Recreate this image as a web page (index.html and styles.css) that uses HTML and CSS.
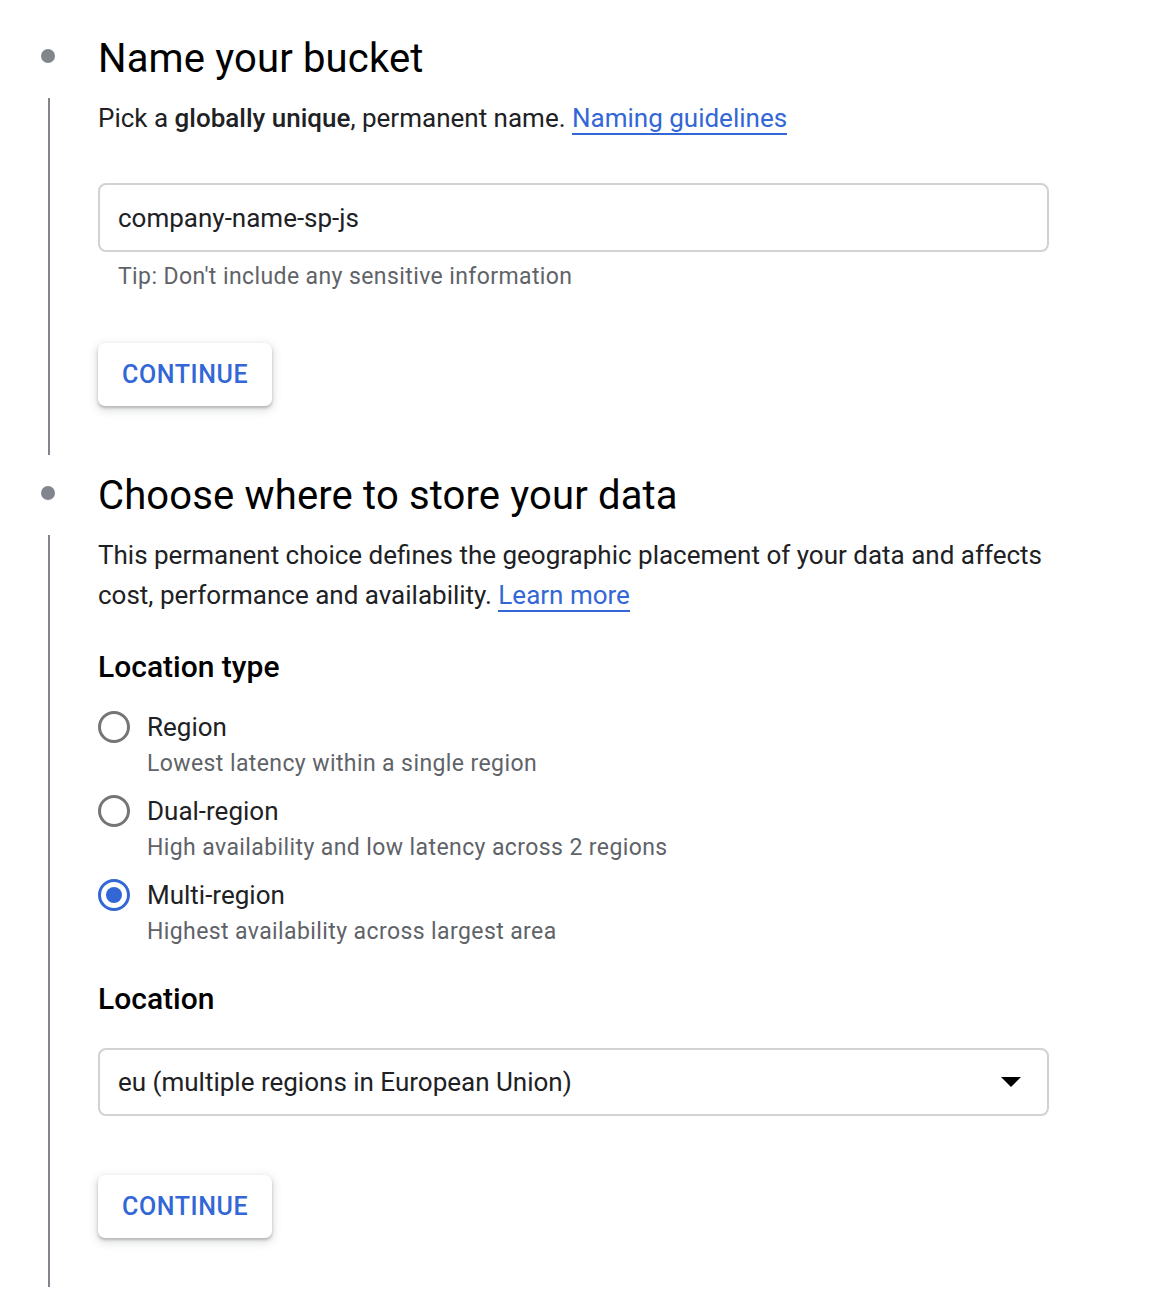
FILE: index.html
```html
<!DOCTYPE html>
<html lang="en">
<head>
<meta charset="utf-8">
<title>Create a bucket</title>
<link rel="stylesheet" href="styles.css">
</head>
<body>
<main class="stepper">
  <section class="step">
    <div class="rail-head"><span class="dot"></span></div>
    <h2 class="step-title">Name your bucket</h2>
    <div class="rail-body"><span class="rail-line"></span></div>
    <div class="step-body">
      <p class="para">Pick a <strong>globally unique</strong>, permanent name. <a class="link" href="#">Naming guidelines</a></p>
      <div class="field">company-name-sp-js</div>
      <p class="hint">Tip: Don't include any sensitive information</p>
      <button class="btn btn-1" type="button">CONTINUE</button>
    </div>
  </section>

  <section class="step">
    <div class="rail-head"><span class="dot"></span></div>
    <h2 class="step-title">Choose where to store your data</h2>
    <div class="rail-body"><span class="rail-line"></span></div>
    <div class="step-body">
      <p class="para">This permanent choice defines the geographic placement of your data and affects cost, performance and availability. <a class="link" href="#">Learn more</a></p>
      <h3 class="sub-title">Location type</h3>
      <div class="radios">
        <div class="option">
          <span class="radio"></span>
          <div class="option-text">
            <div class="option-label">Region</div>
            <div class="option-desc">Lowest latency within a single region</div>
          </div>
        </div>
        <div class="option">
          <span class="radio"></span>
          <div class="option-text">
            <div class="option-label">Dual-region</div>
            <div class="option-desc">High availability and low latency across 2 regions</div>
          </div>
        </div>
        <div class="option">
          <span class="radio radio-on"></span>
          <div class="option-text">
            <div class="option-label">Multi-region</div>
            <div class="option-desc">Highest availability across largest area</div>
          </div>
        </div>
      </div>
      <h3 class="sub-title sub-title-loc">Location</h3>
      <div class="field select">
        <span>eu (multiple regions in European Union)</span>
        <span class="caret"></span>
      </div>
      <button class="btn btn-2" type="button">CONTINUE</button>
    </div>
  </section>
</main>
</body>
</html>
```
FILE: styles.css
```css
* { box-sizing: border-box; }
html, body { margin: 0; padding: 0; background: #fff; }
body {
  font-family: Roboto, "Noto Sans", Arial, sans-serif;
  color: #202124;
}
.stepper {
  padding-top: 35px;
  width: 1049px;
}
.step {
  display: grid;
  grid-template-columns: 98px 1fr;
  grid-template-rows: auto 1fr;
}
.rail-head { display: flex; }
.dot {
  width: 14px;
  height: 14px;
  border-radius: 50%;
  background: #80868b;
  margin: 14px 0 0 41px;
}
.step-title {
  margin: 0;
  font-size: 40px;
  line-height: 48px;
  font-weight: 400;
  letter-spacing: 0.15px;
  color: #000;
}
.rail-body { display: flex; flex-direction: column; }
.rail-line {
  flex: 1;
  width: 2px;
  margin: 15px 0 17px 48px;
  background: #80868b;
}
.step-body {
  display: flex;
  flex-direction: column;
  align-items: flex-start;
  padding-bottom: 66px;
}
.para {
  margin: 15px 0 0;
  font-size: 26px;
  line-height: 40px;
  width: 100%;
}
.para strong { font-weight: 500; }
.link {
  color: #3367d6;
  text-decoration: none;
  border-bottom: 2px solid #3367d6;
}
.field {
  margin-top: 45px;
  width: 100%;
  height: 69px;
  border: 2px solid #d2d2d2;
  border-radius: 8px;
  display: flex;
  align-items: center;
  padding: 0 18px;
  font-size: 26px;
}
.hint {
  margin: 11px 0 0;
  padding-left: 20px;
  font-size: 23px;
  line-height: 28px;
  color: #5f6368;
  letter-spacing: 0.4px;
}
.btn {
  height: 63px;
  padding: 0 24px;
  border: 0;
  border-radius: 7px;
  background: #fff;
  color: #3367d6;
  font-family: inherit;
  font-size: 25px;
  font-weight: 500;
  letter-spacing: 0.6px;
  box-shadow: 0 2px 3px rgba(60, 64, 67, 0.3), 0 3px 8px 2px rgba(60, 64, 67, 0.15);
}
.btn-1 { margin-top: 52px; }
.sub-title {
  margin: 32px 0 0;
  font-size: 30px;
  line-height: 40px;
  font-weight: 500;
  color: #000;
}
.radios {
  margin-top: 22px;
  display: flex;
  flex-direction: column;
  gap: 11px;
}
.option {
  display: flex;
  align-items: flex-start;
  gap: 17px;
}
.radio {
  flex: none;
  width: 32px;
  height: 32px;
  margin-top: 2px;
  border: 3px solid #757575;
  border-radius: 50%;
  display: flex;
  align-items: center;
  justify-content: center;
}
.radio-on { border-color: #3367d6; }
.radio-on::after {
  content: "";
  width: 16px;
  height: 16px;
  border-radius: 50%;
  background: #3367d6;
}
.option-label {
  font-size: 26px;
  line-height: 36px;
}
.option-desc {
  margin-top: 1px;
  font-size: 23px;
  line-height: 36px;
  color: #5f6368;
  letter-spacing: 0.4px;
}
.sub-title-loc { margin-top: 29px; }
.select {
  margin-top: 29px;
  height: 68px;
  justify-content: space-between;
  padding-right: 26px;
}
.caret {
  width: 0;
  height: 0;
  border-left: 10px solid transparent;
  border-right: 10px solid transparent;
  border-top: 10px solid #000;
}
.btn-2 { margin-top: 59px; }
```
